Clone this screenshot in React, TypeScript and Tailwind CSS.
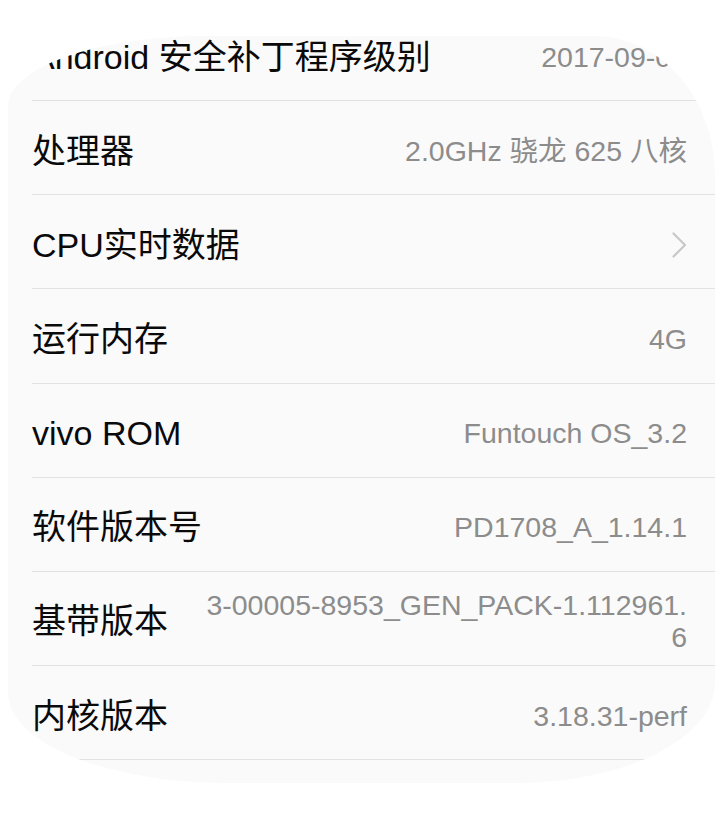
import React from 'react';

type Row = {
  label: string;
  value?: string[];
  chevron?: boolean;
};

const rows: Row[] = [
  { label: 'Android 安全补丁程序级别', value: ['2017-09-01'] },
  { label: '处理器', value: ['2.0GHz 骁龙 625 八核'] },
  { label: 'CPU实时数据', chevron: true },
  { label: '运行内存', value: ['4G'] },
  { label: 'vivo ROM', value: ['Funtouch OS_3.2'] },
  { label: '软件版本号', value: ['PD1708_A_1.14.1'] },
  { label: '基带版本', value: ['3-00005-8953_GEN_PACK-1.112961.', '6'] },
  { label: '内核版本', value: ['3.18.31-perf'] },
];

const Chevron = () => (
  <svg width="15" height="26" viewBox="0 0 15 26" fill="none">
    <path d="M1.5 1.5 L13 13 L1.5 24.5" stroke="#c8c8c8" strokeWidth="2.2" strokeLinecap="round" strokeLinejoin="round" />
  </svg>
);

const InfoRow: React.FC<{ row: Row }> = ({ row }) => (
  <div className="ml-[24px] h-[94.15px] flex items-center justify-between pt-[6px] pr-[28px] border-b border-[#e2e2e2]">
    <span className="text-[34px] leading-none text-[#0a0a0a] whitespace-nowrap">{row.label}</span>
    {row.chevron ? (
      <Chevron />
    ) : (
      <div className="ml-[22px] flex flex-col items-end text-[28.5px] leading-[32px] text-[#8c8c8c]">
        {row.value?.map(line => (
          <span key={line} className="whitespace-nowrap">{line}</span>
        ))}
      </div>
    )}
  </div>
);

export default function App() {
  return (
    <div className="min-h-screen w-full bg-white pt-[36px] pl-[8px] pr-[4px] font-['Liberation_Sans','Noto_Sans_CJK_SC',sans-serif]">
      {/* clipped card, shape follows the photographed screen */}
      <div className="h-[747px] overflow-hidden bg-[#fafafa] rounded-[200px_120px_200px_220px/70px_140px_100px_90px]">
        <div className="-mt-[29px]">
          {rows.map(row => (
            <InfoRow key={row.label} row={row} />
          ))}
        </div>
      </div>
    </div>
  );
}
